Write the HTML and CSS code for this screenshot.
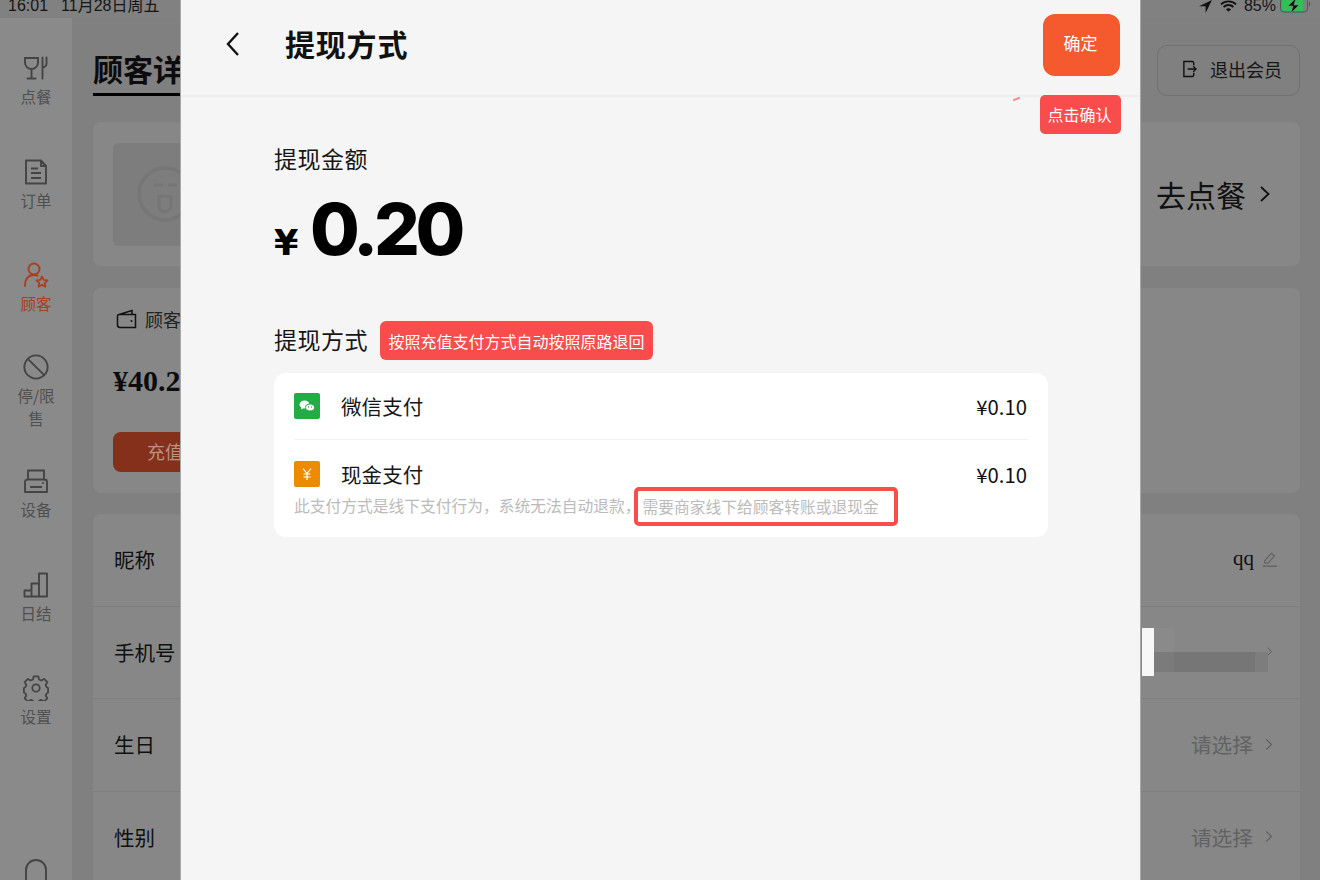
FILE: index.html
```html
<!DOCTYPE html>
<html lang="zh">
<head>
<meta charset="utf-8">
<title>提现方式</title>
<link rel="stylesheet" href="styles.css">
</head>
<body>
<div class="app">
  <div class="status">
    <div class="status-left"><span>16:01</span><span>11月28日周五</span></div>
    <div class="status-right">
      <svg class="st-loc" viewBox="0 0 14 14"><path d="M13 0 0 6.200h6.600V13z" fill="#111"/></svg>
      <svg class="st-wifi" viewBox="0 0 18 13"><path d="M1 4.200C5.500 0 12.500 0 17 4.200M3.800 7C6.800 4.300 11.200 4.300 14.200 7" fill="none" stroke="#111" stroke-width="2"/><path d="M6.300 9.400C8 8 10 8 11.700 9.400L9 12z" fill="#111"/></svg>
      <span>85%</span>
      <svg class="st-bat" viewBox="0 0 32 14"><rect x=".5" y="-2" width="27" height="14" rx="3.500" fill="none" stroke="#555"/><rect x="2" y="-1" width="21" height="12" rx="2" fill="#2fc155"/><path d="M29 1.500c1.500.5 1.500 4.500 0 5z" fill="#555"/><path d="M16 -2 8 6h5l-2 7 8-8h-5l2-7z" fill="#111" stroke="#888" stroke-width=".6"/></svg>
    </div>
  </div>
  <div class="body">
    <nav class="side">
      <div class="nav-item">
        <svg class="nav-icon" viewBox="0 0 26 26"><path d="M2 3h13v4.500a6.500 6.500 0 0 1-13 0zM8.500 14v9M4.500 23.500h8M19.500 2.500v21M23.500 2.500v6a4 4 0 0 1-4 4" fill="none" stroke="currentColor" stroke-width="1.900" stroke-linecap="round"/></svg>
        <span>点餐</span>
      </div>
      <div class="nav-item">
        <svg class="nav-icon" viewBox="0 0 26 26"><path d="M3 1.500h15l5 5.500v17.500H3zM18 2v5h5M8 9.500h7M8 14h10M8 19h10" fill="none" stroke="currentColor" stroke-width="1.900" stroke-linejoin="round"/></svg>
        <span>订单</span>
      </div>
      <div class="nav-item active">
        <svg class="nav-icon" viewBox="0 0 26 26"><circle cx="11" cy="7" r="5.500" fill="none" stroke="currentColor" stroke-width="1.900"/><path d="M2 24c0-7 3-11 9-11 1.500 0 2.500.2 3.500.7" fill="none" stroke="currentColor" stroke-width="1.900" stroke-linecap="round"/><path d="m19 14.500 1.700 3.400 3.800.5-2.700 2.600.6 3.700-3.400-1.800-3.400 1.800.6-3.700-2.700-2.600 3.800-.5z" fill="none" stroke="currentColor" stroke-width="1.800" stroke-linejoin="round"/></svg>
        <span>顾客</span>
      </div>
      <div class="nav-item stop">
        <svg class="nav-icon" viewBox="0 0 28 28"><circle cx="14" cy="14" r="12.500" fill="none" stroke="currentColor" stroke-width="2"/><path d="M5.500 5.500 22.500 22.500" stroke="currentColor" stroke-width="2"/></svg>
        <span>停/限<br>售</span>
      </div>
      <div class="nav-item">
        <svg class="nav-icon" viewBox="0 0 26 26"><path d="M5 12V2.500h16V12M2 14a2.500 2.500 0 0 1 2.500-2.500h17A2.500 2.500 0 0 1 24 14v10H2zM7 19h12" fill="none" stroke="currentColor" stroke-width="1.900" stroke-linejoin="round"/><circle cx="20" cy="15" r="1" fill="currentColor"/></svg>
        <span>设备</span>
      </div>
      <div class="nav-item">
        <svg class="nav-icon" viewBox="0 0 26 26"><path d="M1.500 18.500h7v6h-7zM8.500 11.500h7.500v13H8.500zM16 1.500h8v23h-8z" fill="none" stroke="currentColor" stroke-width="1.900" stroke-linejoin="round"/></svg>
        <span>日结</span>
      </div>
      <div class="nav-item">
        <svg class="nav-icon" viewBox="0 0 28 28"><path d="M11.500 1.500h5l.8 3.400 2.400 1.100 3-1.800 3.500 3.500-1.800 3 1.100 2.400 1.500.8v5l-1.500.8-1.100 2.400 1.800 3-3.500 3.500-3-1.800-2.400 1.100-.8 3.400h-5l-.8-3.400-2.400-1.100-3 1.800-3.500-3.500 1.800-3-1.100-2.400-1.500-.8v-5l1.500-.8 1.100-2.400-1.800-3 3.500-3.500 3 1.800 2.400-1.100z" fill="none" stroke="currentColor" stroke-width="1.900" stroke-linejoin="round"/><circle cx="14" cy="14" r="4" fill="none" stroke="currentColor" stroke-width="1.900"/></svg>
        <span>设置</span>
      </div>
      <div class="nav-item bell">
        <svg class="nav-icon" viewBox="0 0 26 26"><path d="M3 26V12a10 10 0 0 1 20 0v14" fill="none" stroke="currentColor" stroke-width="1.900"/></svg>
      </div>
    </nav>
    <main class="main">
      <header class="main-head">
        <h1 class="main-title">顾客详情</h1>
        <button class="logout">
          <svg viewBox="0 0 16 18" class="logout-icon"><path d="M12.500 5V2.500a1.500 1.500 0 0 0-1.500-1.500H2v16h9a1.500 1.500 0 0 0 1.500-1.500V13M6 9h9M12 6l3 3-3 3" fill="none" stroke="#111" stroke-width="1.500"/></svg>
          退出会员
        </button>
      </header>
      <section class="card profile">
        <div class="avatar">
          <svg viewBox="0 0 60 60"><circle cx="30" cy="30" r="26" fill="none" stroke="#767676" stroke-width="3.500"/><path d="M19 21h9M33 21h9" stroke="#767676" stroke-width="3"/><path d="M24 32.500h12v9a6 6 0 0 1-12 0z" fill="none" stroke="#767676" stroke-width="3"/></svg>
        </div>
        <div class="go-order">去点餐<svg viewBox="0 0 10 16" class="go-chev"><path d="M1 1l7.500 7L1 15" fill="none" stroke="#111" stroke-width="1.800"/></svg></div>
      </section>
      <section class="card wallet">
        <div class="wallet-head">
          <svg viewBox="0 0 22 20" class="wallet-icon"><path d="M3 5.500 16 1.500v4M1.500 7a1.500 1.500 0 0 1 1.500-1.500h16.500v13H4a2.500 2.500 0 0 1-2.500-2.500z" fill="none" stroke="#111" stroke-width="1.500"/><circle cx="15.500" cy="12" r="1" fill="#111"/></svg>
          <span>顾客余额</span>
        </div>
        <div class="wallet-amt">¥40.20</div>
        <button class="topup">充值</button>
      </section>
      <section class="card info">
        <div class="row"><span>昵称</span><span class="row-val nick"><span class="qq">qq</span>
          <svg viewBox="0 0 18 20" class="edit"><path d="M3 12 10.500 3.500 14 6.500 7 14.500H3zM1 18h16" fill="none" stroke="#5f5f5f" stroke-width="1.200"/></svg></span></div>
        <div class="row"><span>手机号</span><span class="row-val"><svg viewBox="0 0 8 12" class="chev-s"><path d="M1 1l5 5-5 5" fill="none" stroke="#5a5a5a" stroke-width="1.300"/></svg></span></div>
        <div class="row"><span>生日</span><span class="row-val muted">请选择<svg viewBox="0 0 10 16" class="chev"><path d="M1.500 1.500 8 8l-6.500 6.500" fill="none" stroke="#5f5f5f" stroke-width="1.500"/></svg></span></div>
        <div class="row"><span>性别</span><span class="row-val muted">请选择<svg viewBox="0 0 10 16" class="chev"><path d="M1.500 1.500 8 8l-6.500 6.500" fill="none" stroke="#5f5f5f" stroke-width="1.500"/></svg></span></div>
      </section>
    </main>
  </div>

  <div class="mosaic">
    <i class="m-white"></i>
    <svg viewBox="0 0 19 8" preserveAspectRatio="none" class="m-blocks" shape-rendering="crispEdges">
      <rect x="0" y="0" width="3.330" height="4" fill="#8a8a8a"/>
      <rect x="0" y="4" width="3.330" height="3.400" fill="#7b7b7b"/>
      <rect x="3.330" y="4" width="13.500" height="3.400" fill="#767676"/>
      <rect x="16.830" y="4" width="2.170" height="3.400" fill="#7d7d7d"/>
    </svg>
  </div>

  <section class="sheet">
    <header class="sheet-head">
      <svg viewBox="0 0 16 26" class="back"><path d="M13 2 3 13l10 11" fill="none" stroke="#111" stroke-width="2.400"/></svg>
      <h2 class="sheet-title">提现方式</h2>
      <button class="confirm">确定</button>
    </header>
    <span class="tag tag-confirm">点击确认</span>
    <i class="red-mark"></i>
    <div class="sheet-body">
      <div class="label">提现金额</div>
      <div class="amount"><span class="yen">¥</span><span class="num">0.20</span></div>
      <div class="method-head">
        <span class="label method-label">提现方式</span>
        <span class="tag tag-method">按照充值支付方式自动按照原路退回</span>
      </div>
      <div class="pay-card">
        <div class="pay-row">
          <svg viewBox="0 0 26 26" class="pay-icon"><rect width="26" height="26" rx="2" fill="#24ab45"/><ellipse cx="10.500" cy="11.500" rx="5" ry="4" fill="#fff"/><path d="M7.500 14.500 7 16.500l2.500-1.300z" fill="#fff"/><ellipse cx="16" cy="14.500" rx="4.500" ry="3.500" fill="#fff" stroke="#24ab45"/><circle cx="14.500" cy="14" r=".7" fill="#24ab45"/><circle cx="17.500" cy="14" r=".7" fill="#24ab45"/></svg>
          <span class="pay-name">微信支付</span>
          <span class="pay-val">¥0.10</span>
        </div>
        <div class="pay-row second">
          <svg viewBox="0 0 26 26" class="pay-icon"><rect width="26" height="26" rx="2" fill="#ec8b00"/><path d="M9 7.500l4 5 4-5M13 12.500V19M9.500 13h7M9.500 16h7" fill="none" stroke="#fff" stroke-width="1.200"/></svg>
          <span class="pay-name">现金支付</span>
          <span class="pay-val">¥0.10</span>
        </div>
        <div class="note"><span>此支付方式是线下支付行为，系统无法自动退款，</span><span class="note-hl">需要商家线下给顾客转账或退现金</span></div>
      </div>
    </div>
  </section>
</div>
</body>
</html>
```
FILE: styles.css
```css
* { box-sizing: border-box; }
html, body { margin: 0; padding: 0; height: 100%; overflow: hidden; }
body { font-family: "Noto Sans CJK SC", "Liberation Sans", sans-serif; color: #111; }
button { font: inherit; }
h1, h2 { margin: 0; }

.app { position: relative; width: 1320px; height: 880px; overflow: hidden; background: #808080; display: flex; flex-direction: column; }

/* status bar */
.status { height: 18px; flex: none; display: flex; justify-content: space-between; padding: 0 8px; background: #818181; font-family: "Liberation Sans", "Noto Sans CJK SC", sans-serif; font-size: 16px; line-height: 12px; color: #151515; overflow: hidden; }
.status-left { display: flex; gap: 13px; }
.status-left span { display: block; height: 13px; }
.status-right { display: flex; gap: 4px; align-items: flex-start; }
.st-loc { width: 14px; height: 14px; margin-right: 3px; }
.st-wifi { width: 17px; height: 13px; margin-right: 3px; }
.st-bat { width: 32px; height: 14px; }

/* sidebar */
.body { flex: 1; display: flex; min-height: 0; }
.side { width: 72px; flex: none; background: #8a8a8a; padding-top: 37px; display: flex; flex-direction: column; align-items: center; }
.nav-item { display: flex; flex-direction: column; align-items: center; text-align: center; font-size: 15.500px; line-height: 23px; color: #4f4f4f; height: 103.500px; flex: none; }
.nav-icon { width: 26px; height: 26px; flex: none; color: #444; margin-bottom: 4px; }
.nav-item.active { color: #a8401f; height: 92px; }
.nav-item.active .nav-icon { color: #a8401f; }
.nav-item.stop { height: 114px; }
.bell { margin-top: 79px; }

/* background page */
.main { flex: 1; padding: 0 20px 0 21px; min-width: 0; }
.main-head { height: 104px; display: flex; justify-content: space-between; align-items: flex-start; padding-top: 27px; }
.main-title { font-size: 30px; line-height: 46px; font-weight: 700; height: 51px; width: 120px; border-bottom: 3px solid #000; color: #0c0c0c; white-space: nowrap; }
.logout { width: 143px; height: 51px; background: transparent; border: 1px solid #707070; border-radius: 10px; color: #161616; font-size: 18px; display: flex; align-items: center; gap: 13px; padding: 0 0 3px 24px; }
.logout-icon { width: 15px; height: 18px; }

.card { background: #878787; border-radius: 8px; margin-bottom: 22px; }
.profile { height: 144px; display: flex; justify-content: space-between; align-items: center; padding: 0 30px 0 20px; }
.avatar { width: 103px; height: 103px; background: #7d7d7d; border-radius: 6px; display: flex; align-items: center; justify-content: center; }
.avatar svg { width: 60px; height: 60px; }
.go-order { font-size: 30px; line-height: 40px; color: #111; display: flex; align-items: center; gap: 14px; }
.go-chev { width: 10px; height: 16px; }

.wallet { height: 205px; margin-bottom: 21px; padding: 18px 20px 0; }
.wallet-head { display: flex; align-items: center; gap: 8px; font-size: 18px; line-height: 26px; color: #222; }
.wallet-icon { width: 22px; height: 20px; margin-right: -1px; margin-left: 3px; }
.wallet-amt { font-family: "Liberation Serif", serif; font-weight: 700; font-size: 30px; line-height: 40px; margin-top: 29px; color: #0c0c0c; }
.topup { width: 200px; height: 40px; margin-top: 31px; border: 0; border-radius: 8px; background: #85301a; color: #bb9286; font-size: 18px; display: block; text-align: left; padding: 0 0 3px 34px; }

.info { padding: 0; }
.row { height: 92.700px; display: flex; justify-content: space-between; align-items: center; padding: 0 27px 2px 21px; border-bottom: 1px solid #7e7e7e; font-size: 20.500px; color: #101010; }
.row-val { display: flex; align-items: center; gap: 6px; }
.nick { margin-right: -5px; gap: 8px; }
.qq { font-family: "Liberation Serif", serif; font-size: 21px; }
.edit { width: 16px; height: 18px; }
.muted { color: #626262; gap: 12px; font-size: 20.700px; }
.chev { width: 8px; height: 15px; }
.chev-s { width: 6px; height: 11px; }

/* redacted phone number */
.mosaic { position: absolute; left: 1142px; top: 628px; display: flex; height: 48px; }
.m-white { display: block; width: 12px; height: 48px; background: #f7f7f7; }
.m-blocks { display: block; width: 114px; height: 48px; }

/* sheet */
.sheet { position: absolute; left: 180px; top: 0; width: 961px; height: 880px; background: #f5f5f5; border-left: 1px solid #a8a8a8; border-right: 1px solid #a8a8a8; display: flex; flex-direction: column; }
.sheet-head { height: 97px; flex: none; border-bottom: 2px solid #eeeeee; display: flex; align-items: flex-start; padding-top: 14px; position: relative; }
.back { width: 16px; height: 26px; margin: 17px 0 0 44px; flex: none; }
.sheet-title { font-size: 30px; line-height: 32px; font-weight: 700; color: #111; margin: 13px 0 0 44px; letter-spacing: .8px; }
.confirm { width: 77px; height: 62px; margin-left: auto; margin-right: 20px; background: #f55a2e; border: 0; border-radius: 12px; color: #fff; font-size: 17px; padding: 0 2px 6px 0; }

.tag { background: #f94d4d; color: #fff; display: flex; align-items: center; justify-content: center; white-space: nowrap; }
.tag-confirm { position: absolute; left: 859px; top: 95px; width: 81px; height: 39px; font-size: 16px; border-radius: 5px; padding: 0 2px 2px 0; }
.red-mark { position: absolute; left: 832px; top: 98px; width: 7px; height: 2px; background: #f58a8a; transform: rotate(-20deg); }

.sheet-body { padding: 0 92px 0 93px; }
.label { font-size: 23px; line-height: 32px; letter-spacing: .5px; color: #161616; white-space: nowrap; }
.sheet-body > .label { margin-top: 45px; }
.amount { display: flex; align-items: baseline; height: 87px; margin-top: 11px; color: #000; }
.yen { font-family: "DejaVu Sans", sans-serif; font-weight: 700; font-size: 35px; line-height: 87px; width: 36px; }
.num { font-family: Inter, "Liberation Sans", sans-serif; font-weight: 800; font-size: 72px; line-height: 87px; letter-spacing: -4.500px; }
.method-head { display: flex; align-items: center; margin-top: 49px; height: 39px; }
.method-label { margin-bottom: 3px; }
.tag-method { height: 39px; width: 273px; margin-left: 12px; font-size: 16px; border-radius: 6px; }
.pay-card { background: #fff; border-radius: 12px; margin-top: 13px; height: 164px; padding: 0 20px; }
.pay-row { display: flex; align-items: center; height: 67px; border-bottom: 1px solid #f2f2f2; }
.pay-row.second { border-bottom: 0; height: 68px; }
.pay-icon { width: 26px; height: 26px; flex: none; }
.pay-name { font-size: 20.500px; line-height: 28px; margin-left: 21px; color: #161616; letter-spacing: .1px; }
.pay-val { margin-left: auto; margin-right: 1px; font-family: "Noto Sans CJK SC", sans-serif; font-size: 20.300px; line-height: 28px; color: #111; }
.note { display: flex; align-items: center; font-size: 15.750px; line-height: 22px; color: #bbbbbb; margin-top: -13px; white-space: nowrap; }
.note-hl { border: 4px solid #f94d4d; border-radius: 5px; padding: 0 15px 0 5px; margin: -9px 0 -9px -7px; height: 39px; line-height: 31px; position: relative; }
```
